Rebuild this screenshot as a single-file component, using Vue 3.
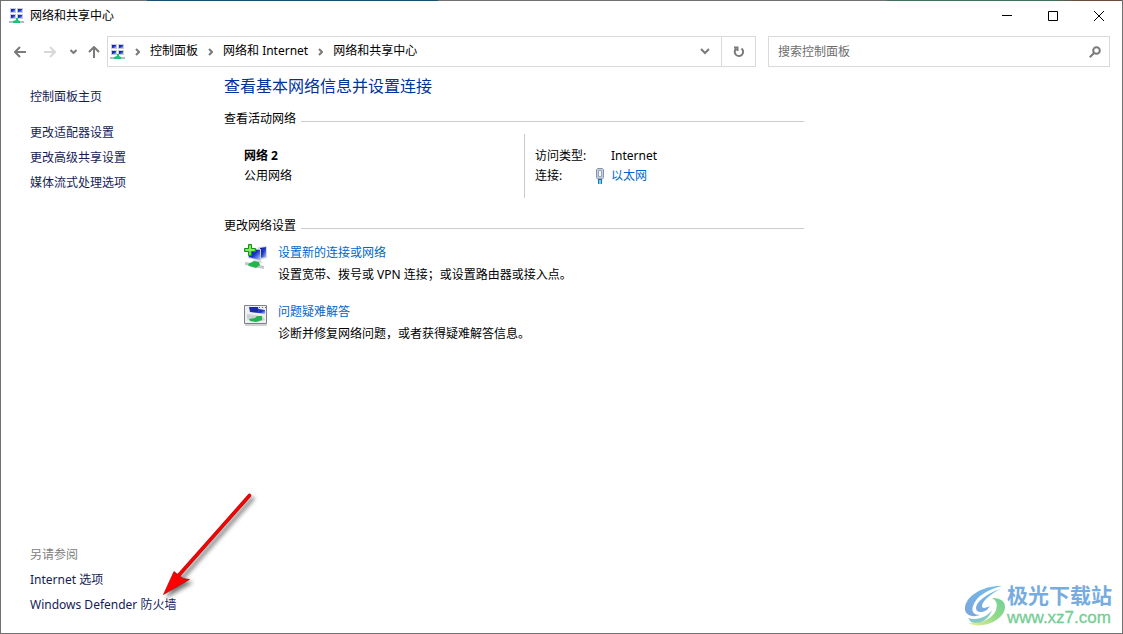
<script setup>
import { ref } from 'vue'

const crumbs = ['控制面板', '网络和 Internet', '网络和共享中心']
const sideLinks = ['更改适配器设置', '更改高级共享设置', '媒体流式处理选项']
const seeAlso = ['Internet 选项', 'Windows Defender 防火墙']
const query = ref('')
const screens = [[2, 1], [9, 1], [2, 7], [9, 7]]
</script>

<template>
  <div class="window">
    <svg class="defs" width="0" height="0" aria-hidden="true">
      <defs>
        <linearGradient id="screen" x1="0" y1="0" x2="1" y2="1">
          <stop offset="0" stop-color="#0a1a9c" />
          <stop offset="0.5" stop-color="#1c36cc" />
          <stop offset="1" stop-color="#b4c8f4" />
        </linearGradient>
        <symbol id="network" viewBox="0 0 16 16">
          <g v-for="([x, y], i) in screens" :key="i">
            <rect :x="x - 1" :y="y - 1" width="6" height="5" fill="#c6cbd8" />
            <rect :x="x" :y="y" width="4" height="3" fill="url(#screen)" />
          </g>
          <path d="M0 13h15v2H0z" fill="#b4bcc0" />
          <path d="M7 10h2v2l2 1v2H4v-2l3-1z" fill="#12c878" />
        </symbol>
      </defs>
    </svg>

    <header class="titlebar">
      <svg class="net" width="16" height="16"><use href="#network" /></svg>
      <h1>网络和共享中心</h1>
      <div class="controls">
        <button aria-label="最小化"><svg width="10" height="10"><path d="M0 4.500h10" /></svg></button>
        <button aria-label="最大化"><svg width="10" height="10"><path d="M.5.5h9v9h-9z" /></svg></button>
        <button aria-label="关闭"><svg width="10" height="10"><path d="M0 0l10 10M10 0L0 10" /></svg></button>
      </div>
    </header>

    <nav class="toolbar">
      <div class="history">
        <button aria-label="后退"><svg width="12" height="12"><path d="M12 6H1M6 1L1 6l5 5" /></svg></button>
        <button class="off" aria-label="前进"><svg width="12" height="12"><path d="M0 6h11M6 1l5 5-5 5" /></svg></button>
        <button class="small" aria-label="最近浏览的位置"><svg width="7" height="5"><path d="M.5 1l3 3 3-3" /></svg></button>
        <button class="up" aria-label="上移"><svg width="12" height="12"><path d="M6 12V1M1 6l5-5 5 5" /></svg></button>
      </div>
      <div class="address">
        <svg class="net" width="16" height="16"><use href="#network" /></svg>
        <template v-for="c in crumbs" :key="c">
          <svg class="sep" width="5" height="8"><path d="M1 1l3 3-3 3" /></svg>
          <button class="crumb">{{ c }}</button>
        </template>
        <button class="drop" aria-label="以前的位置"><svg width="10" height="7"><path d="M1 1l4 4 4-4" /></svg></button>
        <button class="refresh" aria-label="刷新">
          <svg width="12" height="12"><path d="M8.500 2.500A4.200 4.200 0 1 1 3 2.800M1 1.500h3.500V5" /></svg>
        </button>
      </div>
      <label class="search">
        <input v-model="query" type="text" placeholder="搜索控制面板" aria-label="搜索控制面板">
        <svg width="12" height="12"><circle cx="7.500" cy="4.500" r="3.300" /><path d="M5 7L.8 11.200" /></svg>
      </label>
    </nav>

    <div class="body">
      <aside>
        <a class="home" href="#">控制面板主页</a>
        <a v-for="l in sideLinks" :key="l" href="#">{{ l }}</a>
        <div class="also">
          <p>另请参阅</p>
          <a v-for="l in seeAlso" :key="l" href="#">{{ l }}</a>
        </div>
      </aside>

      <main>
        <h2>查看基本网络信息并设置连接</h2>
        <h3>查看活动网络</h3>
        <section class="active">
          <div class="name">
            <strong>网络 2</strong>
            <span>公用网络</span>
          </div>
          <dl>
            <dt>访问类型:</dt>
            <dd>Internet</dd>
            <dt>连接:</dt>
            <dd>
              <svg class="plug" width="10" height="16" viewBox="0 0 10 16">
                <path d="M1.500 1.500l1-1h5l1 1v8l-1 1.500h-5l-1-1.500z" fill="#c3cfe0" stroke="#8492ac" />
                <path d="M3.500 2.500h3v6h-3z" fill="#f2f6fc" stroke="#9aa6bc" />
                <path d="M3 11.500h4" stroke="#4a6488" />
                <path d="M3 12h1v4H3zM6 12h1v4H6z" fill="#1280b8" />
                <path d="M4 12h2v4H4z" fill="#6fd0ee" />
              </svg>
              <a href="#">以太网</a>
            </dd>
          </dl>
        </section>

        <h3>更改网络设置</h3>
        <section class="task">
          <svg width="24" height="26" viewBox="0 0 24 26">
            <path d="M14 3l9-1v12l-7 2z" fill="#d5d9e2" />
            <path d="M16 4l6-1v10l-6 1z" fill="url(#screen)" />
            <path d="M4 4l13 1v12L4 14z" fill="#c8cdda" />
            <path d="M5 5l11 1v10L5 13z" fill="url(#screen)" />
            <path d="M9 16l8 1 2 2-9-1z" fill="#d7d9dc" />
            <path d="M1 18l7 1 12 3v3l-5-1-14-3z" fill="#c4c8cb" />
            <path d="M4 20l6-3 5 1 1 3-4 3-7-2z" fill="#22b64c" />
            <path d="M4.500.5h3v4h4v3h-4v4h-3v-4h-4v-3h4z" fill="#6bdc3c" stroke="#16921c" />
            <path d="M6 2v4H2M6 6h4" fill="none" stroke="#a9f580" />
          </svg>
          <div>
            <a href="#">设置新的连接或网络</a>
            <p>设置宽带、拨号或 VPN 连接；或设置路由器或接入点。</p>
          </div>
        </section>
        <section class="task">
          <svg width="24" height="26" viewBox="0 0 24 26">
            <path d="M1 22h22" stroke="#d2d2d2" stroke-width="2" />
            <path d="M.5 2.500h22v18H.5z" fill="#edf0f2" stroke="#7d8288" />
            <path d="M15 4.500h1M18 4.500h1M21 4.500h1" stroke="#596068" />
            <path d="M5 4h9l1 6-9-1z" fill="#1b2ba8" />
            <path d="M14 6l7 1v4l-6-1z" fill="url(#screen)" />
            <path d="M3 11l7 1 9 2 2 3-8 2-10-3z" fill="#cdd1d4" />
            <path d="M5 16l6-1 2-2h5v4l-6 2-6-1z" fill="#20b54d" />
          </svg>
          <div>
            <a href="#">问题疑难解答</a>
            <p>诊断并修复网络问题，或者获得疑难解答信息。</p>
          </div>
        </section>
      </main>
    </div>

    <svg class="arrow" width="110" height="118" viewBox="0 0 110 118" aria-hidden="true">
      <path d="M95.500 4.500L25 84" fill="none" stroke="#a01010" stroke-width="3.600" stroke-linecap="round" />
      <path d="M9.500 103.500L20 80.500l5 4 4 3 6.500 1z" fill="#f00" stroke="#a01010" stroke-width=".7" />
      <path d="M95.500 4.500L25 84" fill="none" stroke="#f00" stroke-width="2.600" stroke-linecap="round" />
    </svg>

    <div class="brand">
      <svg width="42" height="42" viewBox="0 0 42 42" aria-hidden="true">
        <defs>
          <linearGradient id="swoosh" x1="1" y1="0" x2="0" y2="1">
            <stop offset="0" stop-color="#70bdec" /><stop offset="1" stop-color="#7ba6de" />
          </linearGradient>
          <linearGradient id="leaf" x1="1" y1="0" x2="0" y2="1">
            <stop offset="0" stop-color="#6fd09a" /><stop offset="0.5" stop-color="#94da8a" /><stop offset="1" stop-color="#ecef8c" />
          </linearGradient>
        </defs>
        <path d="M38 1C22 0 3 9 1 22c-1 8 7 11 15 8-6 0-9-3-7-9C12 11 25 4 38 1z" fill="url(#swoosh)" />
        <path d="M36 4C22 9 12 17 12 23c0 5 6 5 11 2l3-4c-4 2-8 3-8 0 0-5 9-12 18-17z" fill="url(#swoosh)" />
        <path d="M28 13c7 0 13 2 13 9 0 9-12 17-22 18-6 1-12 0-14-2 13 1 24-5 27-13 2-6 0-10-4-12z" fill="url(#leaf)" />
        <path d="M4 33c9 3 19-1 24-8-3 10-13 15-21 12z" fill="#86c8c6" />
      </svg>
      <div>
        <b>极光下载站</b>
        <span>www.xz7.com</span>
      </div>
    </div>
  </div>
</template>

<style>
body { background: #fff; }
</style>

<style scoped>
* { box-sizing: border-box; margin: 0; padding: 0; }
.window {
  position: relative;
  display: flex;
  flex-direction: column;
  min-height: 100vh;
  border: 1px solid #707070;
  border-top: 0;
  background: #fff;
  color: #000;
  font: 12px/20px "Noto Sans", "Noto Sans CJK SC", sans-serif;
}
.window::before {
  content: "";
  height: 1px;
  background: linear-gradient(90deg, #707070 13%, #1d5070 13% 39%, #707070 39% 79%, #41705a 79% 94%, #6c4a3c 96%);
}
.defs { position: absolute; }
button { border: 0; background: none; font: inherit; color: inherit; display: flex; align-items: center; justify-content: center; }
a { text-decoration: none; }
svg { flex: none; }
button svg, .sep, .search svg { fill: none; stroke: #7a7a7a; stroke-width: 2; }

.titlebar { display: flex; align-items: center; height: 29px; padding-left: 8px; }
.titlebar h1 { flex: 1; margin-left: 5px; font-size: 12px; font-weight: 400; }
.controls { display: flex; align-self: stretch; }
.controls button { width: 46px; }
.controls svg { stroke: #000; stroke-width: 1; }

.toolbar { display: flex; height: 31px; margin: 6px 12px 0 0; }
.history { display: flex; width: 106px; padding-left: 4px; }
.history button { width: 30px; }
.history .small { width: 17px; }
.history .up { width: 24px; }
.history .off svg { stroke: #d8d8d8; }
.history .small svg { stroke-width: 2; }
.address { flex: 1; display: flex; align-items: center; border: 1px solid #d9d9d9; padding-left: 2px; }
.sep { margin: 0 10px 0 9px; }
.crumb + .sep { margin-left: 10px; }
.crumb { padding-bottom: 2px; }
.drop { width: 32px; margin-left: auto; }
.refresh { width: 34px; align-self: stretch; border-left: 1px solid #d9d9d9; }
.search { display: flex; align-items: center; width: 342px; margin-left: 12px; padding: 0 8px 0 9px; border: 1px solid #d9d9d9; }
.search input { flex: 1; min-width: 0; border: 0; outline: 0; background: none; font: inherit; }
.search input::placeholder { color: #6d6d6d; opacity: 1; }

.body { flex: 1; display: flex; padding: 7px 0 16px; }
aside { display: flex; flex-direction: column; align-items: flex-start; width: 223px; padding: 10px 0 0 29px; line-height: 25px; }
aside a { color: #151c55; }
.home { margin-bottom: 11px; }
.also { display: flex; flex-direction: column; margin-top: auto; }
.also p { color: #808080; }

main { flex: 0 1 580px; }
h2 { color: #003399; font-size: 16px; font-weight: 400; line-height: 24px; margin-bottom: 11px; }
h3 { display: flex; align-items: center; gap: 5px; font-size: 12px; font-weight: 400; }
h3::after { content: ""; flex: 1; height: 1px; margin-top: 4px; background: #ccc; }
.active { display: flex; min-height: 64px; margin: 5px 0 18px; }
.name { display: flex; flex-direction: column; width: 300px; padding: 12px 0 0 20px; }
dl { display: grid; grid-template-columns: 60px 1fr; grid-auto-rows: 20px; align-content: start; flex: 1; border-left: 1px solid #ccc; padding: 12px 0 0 10px; }
dd { display: flex; align-items: center; padding-left: 16px; }
.plug { margin: 0 6px 0 -16px; }
dd a, .task a { color: #0066cc; }
.task { display: flex; gap: 10px; padding-left: 20px; margin: 6px 0 15px; line-height: 22px; }
.task + .task { margin-top: 0; }
.task svg { margin-top: 2px; }

.arrow { position: absolute; left: 153px; bottom: 24px; filter: drop-shadow(3px 3px 2px #0008); }
.brand { position: absolute; right: 10px; bottom: 5px; display: flex; align-items: center; gap: 1px; }
.brand div { display: flex; flex-direction: column; }
.brand b { color: #76acdf; font-size: 21px; line-height: 25px; }
.brand span { color: #74cd94; font: 17px/20px "Liberation Sans", Arial, sans-serif; -webkit-text-stroke: 0.3px; }
</style>
